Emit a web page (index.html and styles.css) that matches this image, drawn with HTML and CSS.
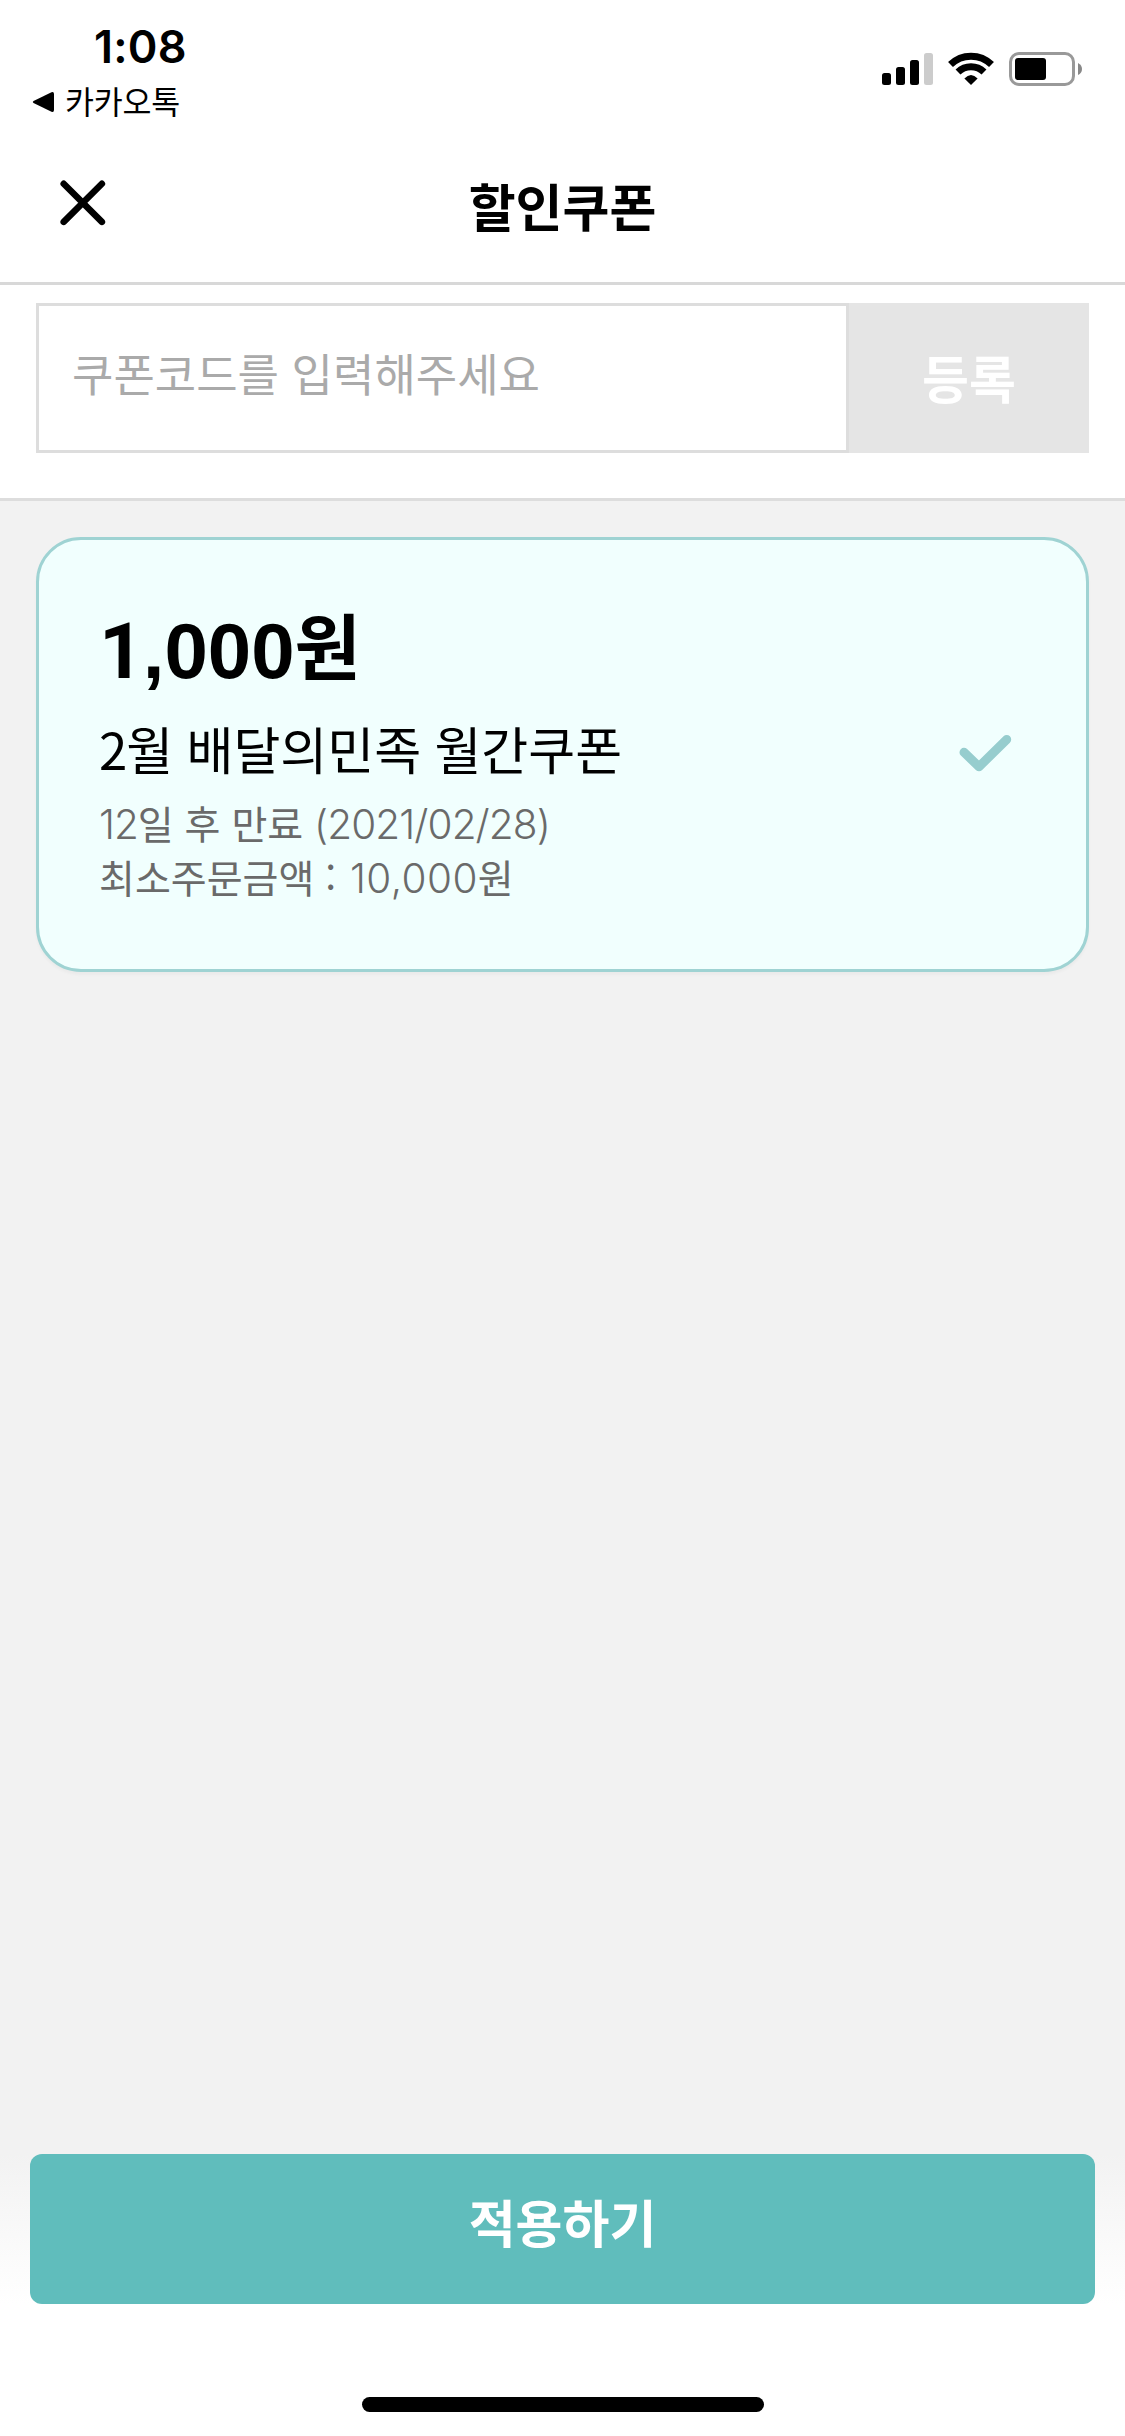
FILE: index.html
```html
<!DOCTYPE html>
<html lang="ko">
<head>
<meta charset="utf-8">
<title>할인쿠폰</title>
<link rel="stylesheet" href="styles.css">
</head>
<body>
<div class="screen">
  <header class="top">
    <div class="status">
      <div class="status-left">
        <div class="clock">1:08</div>
        <div class="back-app">
          <svg class="back-arrow" width="22" height="22" viewBox="0 0 22 22"><path d="M1.5 10 19.5 1.2Q22 .4 22 3V19Q22 21.6 19.5 20.8L1.5 12Q0 11 1.5 10Z"/></svg>
          <span>카카오톡</span>
        </div>
      </div>
      <svg class="indicators" width="202" height="36" viewBox="881 51 202 36">
        <rect x="882" y="73" width="9" height="12" rx="2.5"/>
        <rect x="896" y="67" width="9" height="18" rx="2.5"/>
        <rect x="910" y="60" width="9" height="25" rx="2.5"/>
        <rect x="924" y="53" width="9" height="32" rx="2.5" fill="#ccc"/>
        <g fill="none" stroke="#000" stroke-width="7">
          <path d="M950.5 64.5A29.3 29.3 0 0 1 991.5 64.5"/>
          <path d="M958 72A18.6 18.6 0 0 1 984 72"/>
        </g>
        <path d="M971 85 964.4 78.6Q971 71.6 977.6 78.6Z"/>
        <rect x="1010.5" y="53.5" width="63" height="31" rx="8.5" fill="none" stroke="#999" stroke-width="3"/>
        <rect x="1015" y="58" width="31" height="22" rx="3"/>
        <path d="M1078 63Q1082 65 1082 69T1078 75Z" fill="#888"/>
      </svg>
    </div>
    <div class="titlebar">
      <svg class="close" width="46" height="46" viewBox="0 0 46 46"><path d="M3.7 3.7 41.9 41.9M41.9 3.7 3.7 41.9"/></svg>
      <h1 class="title">할인쿠폰</h1>
    </div>
  </header>

  <section class="register">
    <div class="code-field">쿠폰코드를 입력해주세요</div>
    <div class="code-submit">등록</div>
  </section>

  <main class="coupons">
    <article class="coupon">
      <div class="coupon-text">
        <div class="amount"><span class="lead">1</span>,000<span class="won">원</span></div>
        <div class="name"><span class="month">2</span>월 배달의민족 월간쿠폰</div>
        <div class="detail"><span class="num days">12</span>일 후 만료 <span class="num date">(2021/02/28)</span></div>
        <div class="detail">최소주문금액 : <span class="num price">10,000</span>원</div>
      </div>
      <svg class="check" width="54" height="40" viewBox="958 734 54 40"><path d="M964 752.3 979 766.8 1006.7 739.5"/></svg>
    </article>
  </main>

  <footer class="bottom">
    <div class="apply">적용하기</div>
    <div class="home-bar"></div>
  </footer>
</div>
</body>
</html>
```
FILE: styles.css
```css
* {
  box-sizing: border-box;
}

body {
  margin: 0;
  background: #fff;
  color: #000;
  font-family: "Noto Sans CJK KR", sans-serif;
}

.screen {
  display: flex;
  flex-direction: column;
  width: 1125px;
  height: 2436px;
  overflow: hidden;
}

/* Status bar and title */
.top {
  height: 285px;
  border-bottom: 3px solid #d8d8d8;
}

.status {
  display: flex;
  justify-content: space-between;
  align-items: flex-start;
  height: 132px;
  padding: 20px 42px 0 32px;
}

.clock {
  padding-left: 62px;
  font: 600 45px/54px Inter, sans-serif;
  letter-spacing: 0.2px;
}

.back-app {
  display: flex;
  align-items: center;
  gap: 11px;
  height: 54px;
  font-size: 31.5px;
  line-height: 54px;
}

.back-app span {
  margin-top: -2px;
  letter-spacing: -0.2px;
}

.back-arrow {
  margin-top: 2px;
}

.indicators {
  margin-top: 31px;
}

.titlebar {
  display: grid;
  grid-template-columns: 45px 1fr 45px;
  align-items: center;
  height: 146px;
  padding: 0 60px;
}

.close {
  margin-top: -5px;
  fill: none;
  stroke: #000;
  stroke-width: 6.5;
  stroke-linecap: round;
}

.title {
  margin: 0;
  text-align: center;
  font-size: 51px;
  font-weight: 700;
  line-height: 60px;
}

/* Coupon code entry */
.register {
  display: flex;
  height: 216px;
  padding: 18px 36px 45px;
  border-bottom: 3px solid #ddd;
}

.code-field {
  width: 813px;
  height: 150px;
  padding-left: 33px;
  border: 3px solid #ddd;
  color: #aaa;
  font-size: 45px;
  line-height: 134px;
}

.code-submit {
  flex: 1;
  height: 150px;
  background: #e5e5e5;
  color: #fff;
  font-size: 51px;
  font-weight: 700;
  line-height: 148px;
  text-align: center;
}

/* Coupon list */
.coupons {
  flex: 1;
  padding: 36px;
  background: #f2f2f2;
}

.coupon {
  display: flex;
  justify-content: space-between;
  align-items: flex-start;
  height: 435px;
  padding: 66px 74px 0 60px;
  border: 3px solid #9fd3d3;
  border-radius: 45px;
  background: #f1fffe;
  box-shadow: 0 3px 3px rgba(0, 0, 0, 0.03);
}

.amount {
  height: 90px;
  font: 700 78px/90px "Liberation Sans", "Noto Sans CJK KR", sans-serif;
}

.lead {
  font-family: Roboto, sans-serif;
  line-height: 1;
  letter-spacing: -1px;
}

.won {
  font-family: "Noto Sans CJK KR", sans-serif;
  font-size: 72px;
  line-height: 1;
  vertical-align: 4px;
}

.name {
  margin: 22px 0 17px;
  font-size: 51px;
  line-height: 61px;
  word-spacing: -1px;
}

.month {
  letter-spacing: -1px;
}

.detail {
  height: 54px;
  color: #6a6a6a;
  font-size: 39px;
  line-height: 53px;
}

.num {
  font-family: Inter, "Noto Sans CJK KR", sans-serif;
  font-size: 40.5px;
  font-weight: 350;
  line-height: 1;
}

.days {
  letter-spacing: -1px;
}

.date {
  letter-spacing: -0.9px;
}

.price {
  margin-left: 3px;
  letter-spacing: 0.4px;
}

.check {
  margin-top: 128px;
  fill: none;
  stroke: #96cdce;
  stroke-width: 9;
  stroke-linecap: round;
  stroke-linejoin: round;
}

/* Apply button */
.bottom {
  display: flex;
  flex-direction: column;
  align-items: center;
  height: 282px;
  background: linear-gradient(#f2f2f2, #fff 150px);
}

.apply {
  width: 1065px;
  height: 150px;
  border-radius: 12px;
  background: #60bdbc;
  color: #fff;
  font-size: 51px;
  font-weight: 700;
  line-height: 135px;
  text-align: center;
}

.home-bar {
  width: 402px;
  height: 15px;
  margin-top: 93px;
  border-radius: 8px;
  background: #000;
}
```
